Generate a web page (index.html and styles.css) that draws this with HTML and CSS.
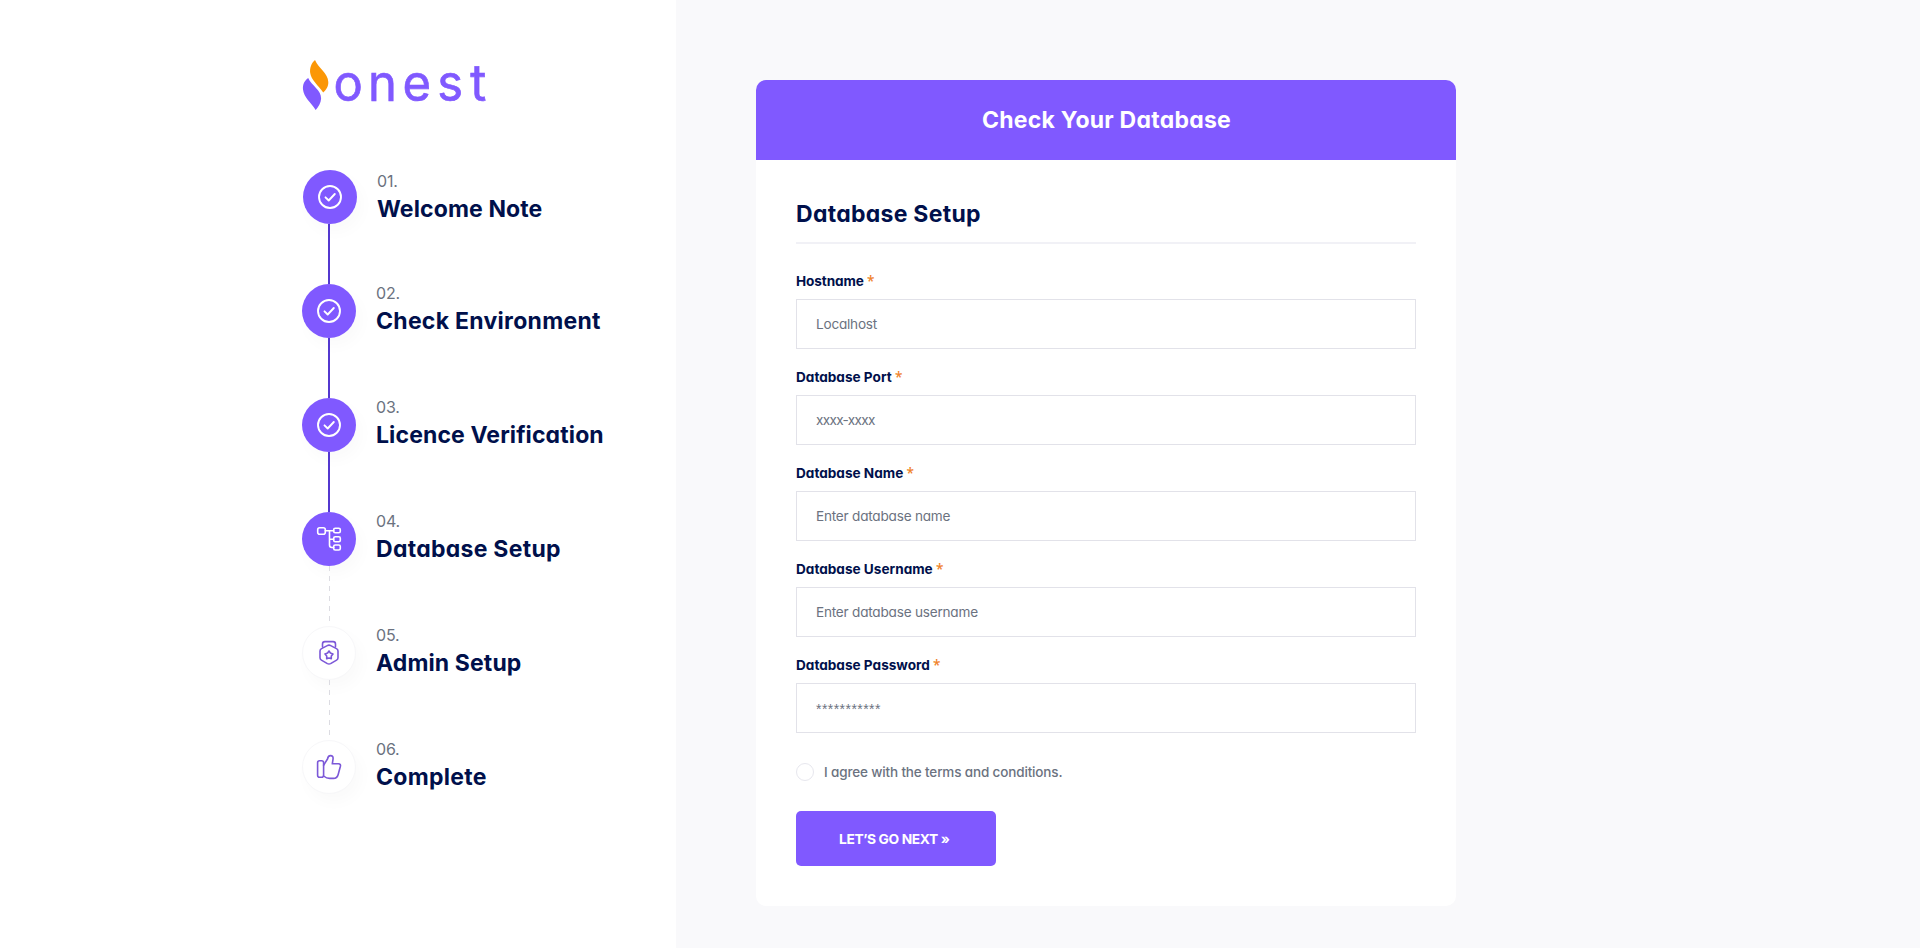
FILE: index.html
```html
<!DOCTYPE html>
<html lang="en">
<head>
<meta charset="utf-8">
<title>Onest Installer - Database Setup</title>
<link rel="stylesheet" href="styles.css">
</head>
<body>
<div class="page">
  <aside class="sidebar">
    <svg class="logo" width="200" height="76" viewBox="0 -10 200 76">
      <path fill="#fb9706" d="M13 2C9.500 5 7.500 10 8.200 15C9.200 22 16 27 21.200 34.500C24 32 26.500 28.500 26.300 24C26 15 16.500 10.500 13 2Z"/>
      <path fill="#8059ff" d="M6.200 20C2.500 22.500 .500 26.500 1 31.500C1.800 39.500 9 44.500 13.700 52C16.500 49 18.900 45 19.100 40.500C19.400 32 9.500 27.500 6.200 20Z"/>
      <text class="logo-word" transform="scale(.96 1)" y="42.700" x="32.800 68.700 104.800 141 175.200">onest</text>
    </svg>
    <ol class="steps">
      <li class="step done first">
        <div class="marker"><span class="dot"><svg width="24" height="24" viewBox="0 0 24 24"><circle cx="12" cy="12" r="11"/><path d="M7.500 12.300l3.200 3.200L16.800 9"/></svg></span><span class="line"></span></div>
        <div class="label"><span class="num">01.</span><h3>Welcome Note</h3></div>
      </li>
      <li class="step done">
        <div class="marker"><span class="dot"><svg width="24" height="24" viewBox="0 0 24 24"><circle cx="12" cy="12" r="11"/><path d="M7.500 12.300l3.200 3.200L16.800 9"/></svg></span><span class="line"></span></div>
        <div class="label"><span class="num">02.</span><h3 class="wide">Check Environment</h3></div>
      </li>
      <li class="step done">
        <div class="marker"><span class="dot"><svg width="24" height="24" viewBox="0 0 24 24"><circle cx="12" cy="12" r="11"/><path d="M7.500 12.300l3.200 3.200L16.800 9"/></svg></span><span class="line"></span></div>
        <div class="label"><span class="num">03.</span><h3>Licence Verification</h3></div>
      </li>
      <li class="step current">
        <div class="marker"><span class="dot"><svg class="thin" width="26" height="26" viewBox="0 0 26 26"><rect x="1.700" y="1.700" width="7.600" height="6.600" rx="2"/><rect x="17.700" y="2.200" width="6.600" height="4.600" rx="1.500"/><rect x="17.700" y="10.700" width="6.600" height="5" rx="1.500"/><rect x="17.700" y="19" width="6.600" height="5" rx="1.500"/><path d="M9.300 4.700h8.400M13.500 4.700v14.300q0 2.500 2.500 2.500h1.700M13.500 13.200h4.200"/></svg></span><span class="line"></span></div>
        <div class="label"><span class="num">04.</span><h3 class="wide">Database Setup</h3></div>
      </li>
      <li class="step todo">
        <div class="marker"><span class="dot"><svg class="thin" width="26" height="26" viewBox="0 0 26 26"><path d="M6.500 6.600V4q0-2.400 2.400-2.400h8.200q2.400 0 2.400 2.400v2.600M11.300 5.600q1.700-.9 3.400 0l5.800 3q1.500.8 1.500 2.400v6.800q0 1.500-1.400 2.300l-6 3.500q-1.600.8-3.200 0l-6-3.500Q4 19.300 4 17.800V11q0-1.600 1.500-2.400Z"/><path d="M13 11l1.400 2 2.600.9-1.700 2.100v2.700l-2.300-.7-2.300.7V16L9 13.900l2.600-.9Z"/></svg></span><span class="line"></span></div>
        <div class="label"><span class="num">05.</span><h3>Admin Setup</h3></div>
      </li>
      <li class="step todo">
        <div class="marker"><span class="dot"><svg class="thin" width="26" height="26" viewBox="0 0 26 26"><rect x="1.600" y="6.800" width="6" height="16.400" rx="2"/><path d="M7.600 11.200L11.500 5q.6-3.400 2.900-3.400 3.200 0 2.600 3.800L16.300 9.800h6.200q2.500 0 1.900 2.500l-2.300 8.400q-1.100 3.700-4.600 3.700h-3.900q-3 0-6-2.400"/></svg></span></div>
        <div class="label"><span class="num">06.</span><h3 class="wide">Complete</h3></div>
      </li>
    </ol>
  </aside>
  <main class="content">
    <section class="card">
      <header class="card-head"><h2>Check Your Database</h2></header>
      <form class="card-body">
        <h3 class="section-title wide">Database Setup</h3>
        <div class="field"><label class="tight">Hostname <b>*</b></label><div class="input">Localhost</div></div>
        <div class="field"><label>Database Port <b>*</b></label><div class="input port">xxxx-xxxx</div></div>
        <div class="field"><label>Database Name <b>*</b></label><div class="input">Enter database name</div></div>
        <div class="field"><label>Database Username <b>*</b></label><div class="input">Enter database username</div></div>
        <div class="field"><label>Database Password <b>*</b></label><div class="input stars">***********</div></div>
        <div class="agree"><span class="radio"></span><span>I agree with the terms and conditions.</span></div>
        <button type="button" class="next">LET’S GO NEXT »</button>
      </form>
    </section>
  </main>
</div>
</body>
</html>
```
FILE: styles.css
```css
* { box-sizing: border-box; margin: 0; padding: 0; }
body { font-family: Inter, "Open Sans", sans-serif; font-feature-settings: "cv11"; background: #f9f9fb; color: #00104b; }
.page { display: flex; height: 948px; overflow: hidden; }
.sidebar { width: 676px; padding: 48px 0 0 302px; background: #fff; }
.logo { display: block; margin-bottom: 46px; overflow: visible; }
.logo-word { font-size: 51px; font-weight: 400; fill: #8059ff; stroke: #8059ff; stroke-width: .7; }
.steps { list-style: none; }
.step { display: flex; gap: 20px; height: 114px; }
.first { padding-left: 1px; }
.first .line { position: relative; left: -1px; }
.marker { display: flex; flex-direction: column; align-items: center; width: 54px; }
.dot { display: flex; flex: none; align-items: center; justify-content: center; width: 54px; height: 54px; border-radius: 50%; background: #8059ff; box-shadow: 5px 8px 16px rgba(0, 0, 0, .025); }
.dot svg { fill: none; stroke: #fff; stroke-width: 1.9; stroke-linecap: round; stroke-linejoin: round; }
.dot .thin { stroke-width: 1.6; }
.line { width: 2px; flex: 1; background: #5338cf; }
.current .line, .todo .line { width: 1px; background: repeating-linear-gradient(#dcdce2 0 5px, transparent 5px 10px); }
.todo .dot { background: #fff; border: 1px solid #f7f7f9; }
.todo .dot svg { stroke: #7c58d8; }
.num { display: block; margin-top: -1px; font-size: 16px; line-height: 20px; color: #6b7280; letter-spacing: -.2px; }
.label h3 { font-size: 23px; font-weight: 700; line-height: 28px; margin-top: 4px; letter-spacing: .12px; white-space: nowrap; }
.label h3.wide, .card-body .wide { letter-spacing: .28px; }
.first .label { margin-top: 2px; }
.first .label h3 { letter-spacing: .12px; }
.content { flex: 1; display: flex; padding: 80px 0 0 80px; }
.card { width: 700px; height: 826px; border-radius: 10px; background: #fff; }
.card-head { display: flex; align-items: center; justify-content: center; height: 80px; border-radius: 10px 10px 0 0; background: #8059ff; color: #fff; }
.card-head h2 { font-size: 23px; font-weight: 700; letter-spacing: .25px; padding-left: 1px; }
.card-body { padding: 36px 40px 0; }
.section-title { height: 48px; font-size: 23px; font-weight: 700; line-height: 36px; border-bottom: 2px solid #f1f1f6; margin-bottom: 26px; }
.field { height: 96px; }
label { display: block; height: 29px; font-size: 13.600px; font-weight: 700; line-height: 22px; }
label.tight { letter-spacing: -.1px; }
label b { color: #f0822a; font-family: "Open Sans", sans-serif; font-weight: 600; line-height: 1; }
.input { display: flex; align-items: center; height: 50px; padding: 0 0 1px 19px; border: 1px solid #e2e2e9; font-size: 13.600px; letter-spacing: -.22px; color: #6b7280; }
.port { letter-spacing: -.7px; }
.stars { padding-top: 2px; font-family: "Liberation Sans", sans-serif; font-size: 14px; letter-spacing: .45px; }
.agree { display: flex; align-items: center; gap: 10px; height: 18px; margin: 13px 0 30px; font-size: 13.500px; font-weight: 500; letter-spacing: -.15px; color: #6b7280; }
.radio { width: 18px; height: 18px; border: 1px solid #e7e7ee; border-radius: 50%; }
.next { display: flex; align-items: center; width: 200px; height: 55px; padding-left: 43px; border: 0; border-radius: 5px; background: #8059ff; color: #fff; font: inherit; font-size: 13.800px; font-weight: 700; letter-spacing: -.4px; }
```
